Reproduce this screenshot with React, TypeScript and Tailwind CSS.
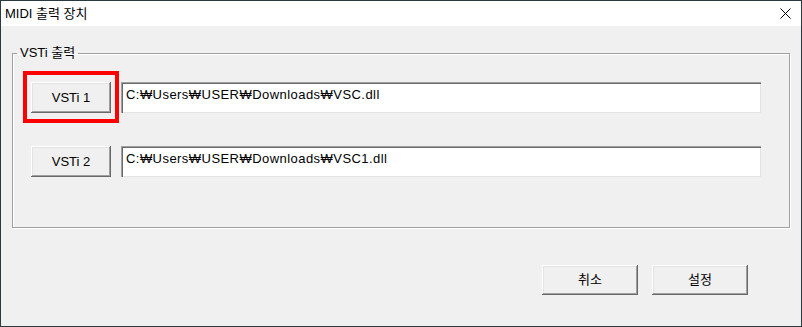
import React from "react";

const font = { fontFamily: '"Liberation Sans", "Noto Sans CJK KR", Arial, sans-serif' };

function Btn({ label, w, h }: { label: string; w: string; h: string }) {
  return (
    <div
      className={`${w} ${h} flex items-center justify-center bg-[#f0f0f0] text-[13px] text-black shadow-[inset_-1px_-1px_0_#696969,inset_1px_1px_0_#ffffff,inset_-2px_-2px_0_#a0a0a0,inset_2px_2px_0_#e3e3e3]`}
    >
      {label}
    </div>
  );
}

function Field({ value }: { value: string }) {
  return (
    <div className="w-[640px] h-[31px] bg-white pl-[5px] pt-[5px] text-[13px] tracking-[0.45px] text-black leading-[15px] shadow-[inset_1px_1px_0_#a0a0a0,inset_2px_2px_0_#696969,inset_-1px_-1px_0_#e3e3e3]">
      {value}
    </div>
  );
}

export default function App() {
  return (
    <div style={font} className="w-[802px] h-[327px] border border-[#2b3a3f] bg-[#f0f0f0] flex flex-col">
      <div className="h-[25px] bg-white flex items-center justify-between pl-[4px] pr-[10px] text-[13px] text-black shrink-0">
        <span>MIDI 출력 장치</span>
        <svg width="11" height="11" viewBox="0 0 11 11">
          <path d="M0.5 0.5 L10.5 10.5 M10.5 0.5 L0.5 10.5" stroke="#000" strokeWidth="1" />
        </svg>
      </div>
      <fieldset className="ml-[11px] mt-[19px] w-[778px] border border-[#a0a0a0] shadow-[1px_1px_0_#ffffff,inset_1px_1px_0_#ffffff] pl-[4px] pt-[21px] pb-[50px] min-w-0">
        <legend className="px-[3px] text-[13px] leading-[16px] text-black">VSTi 출력</legend>
        <div className="flex items-center ml-[14px]">
          <div className="relative">
            <Btn label="VSTi 1" w="w-[80px]" h="h-[31px]" />
            <div className="absolute left-[-8px] top-[-11px] w-[96px] h-[52px] border-[4px] border-[#ff0000] pointer-events-none" />
          </div>
          <div className="ml-[10px]">
            <Field value="C:₩Users₩USER₩Downloads₩VSC.dll" />
          </div>
        </div>
        <div className="flex items-center ml-[14px] mt-[33px]">
          <Btn label="VSTi 2" w="w-[80px]" h="h-[31px]" />
          <div className="ml-[10px]">
            <Field value="C:₩Users₩USER₩Downloads₩VSC1.dll" />
          </div>
        </div>
      </fieldset>
      <div className="flex justify-end gap-[14px] mt-[37px] pr-[53px]">
        <Btn label="취소" w="w-[96px]" h="h-[30px]" />
        <Btn label="설정" w="w-[96px]" h="h-[30px]" />
      </div>
    </div>
  );
}
